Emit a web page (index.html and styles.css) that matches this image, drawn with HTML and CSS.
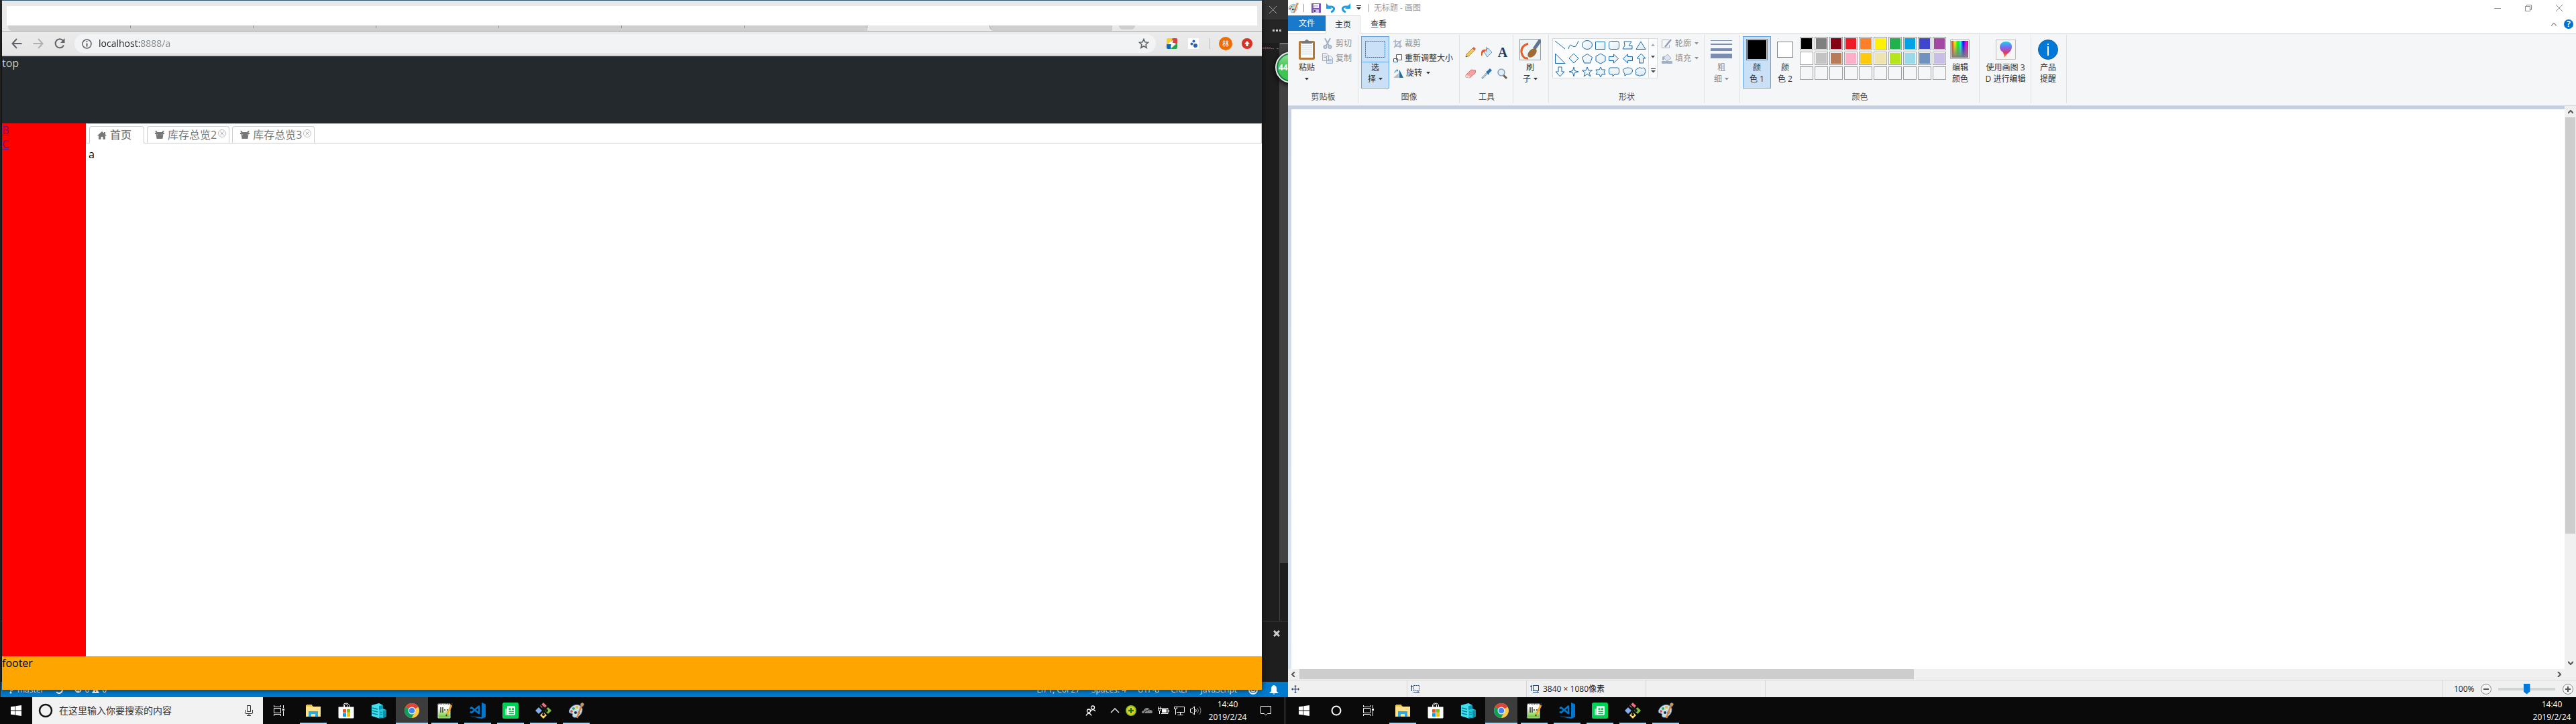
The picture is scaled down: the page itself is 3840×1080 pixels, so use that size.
FILE: index.html
```html
<!DOCTYPE html>
<html lang="zh-CN">
<head>
<meta charset="utf-8">
<title>无标题 - 画图</title>
<link rel="stylesheet" href="styles.css">
</head>
<body>
<svg class="defs" aria-hidden="true">
  <defs>
    <linearGradient id="shapeFill" x1="0" y1="0" x2="1" y2="1"><stop offset="0" stop-color="#fff"/><stop offset="1" stop-color="#dcecf7"/></linearGradient>
    <linearGradient id="rainbow"><stop offset="0" stop-color="#f00"/><stop offset=".2" stop-color="#ff0"/><stop offset=".38" stop-color="#0f0"/><stop offset=".55" stop-color="#0ff"/><stop offset=".7" stop-color="#00f"/><stop offset=".88" stop-color="#f0f"/><stop offset="1" stop-color="#f00"/></linearGradient>
    <linearGradient id="toGray" x1="0" y1="0" x2="0" y2="1"><stop offset="0" stop-color="#808080" stop-opacity="0"/><stop offset="1" stop-color="#808080"/></linearGradient>
    <linearGradient id="drop" x1="0" y1="0" x2="0" y2="1"><stop offset="0" stop-color="#19d3f5"/><stop offset=".35" stop-color="#7a6cf0"/><stop offset=".7" stop-color="#e0336e"/><stop offset="1" stop-color="#ffb300"/></linearGradient>
    <linearGradient id="notes" x1="0" y1="0" x2="0" y2="1"><stop offset=".3" stop-color="#fff"/><stop offset="1" stop-color="#62c41c"/></linearGradient>
    <radialGradient id="ball"><stop offset="0" stop-color="#fff36a"/><stop offset=".6" stop-color="#e5d51a"/><stop offset="1" stop-color="#6db52a"/></radialGradient>
  </defs>
  <symbol id="i-windows" viewBox="0 0 16 16"><path fill="#fff" d="M0 2.3 6.5 1.4v6.2H0zM7.3 1.3 16 0v7.6H7.3zM0 8.4h6.5v6.2L0 13.7zM7.3 8.4H16V16l-8.7-1.3z"/></symbol>
  <symbol id="i-taskview" viewBox="0 0 16 16"><path fill="none" stroke="#fff" d="M.5 0v2.5h10V0M.5 16v-2.5h10V16M.5 4.5h10v7H.5zM14.500 0v4M14.500 9v7"/><path fill="#fff" d="M13 5h3v3h-3z"/></symbol>
  <symbol id="i-folder" viewBox="0 0 22 18"><path fill="#f4c63d" d="M0 1h9l2 2h11v15H0z"/><path fill="#ffe28d" d="M0 3h22v15H0z"/><path fill="#ffb900" d="M1 0h8v1.500H1z"/><path fill="#2fa8e0" d="M4 10h14v8h-4v-4H8v4H4z"/></symbol>
  <symbol id="i-store" viewBox="0 0 24 24"><path fill="none" stroke="#fff" d="M7.500 7V3.500q3-5 6 0V7M9.500 7V3.500q3.500-5 7 0V7"/><path fill="#fff" d="M.5 6.500h23V22q0 1.500-1.500 1.500H2Q.5 23.500.5 22z"/><path fill="#f25022" d="M7 10h5v5H7z"/><path fill="#7fba00" d="M13 10h5v5h-5z"/><path fill="#00a4ef" d="M7 16h5v5H7z"/><path fill="#ffb900" d="M13 16h5v5h-5z"/></symbol>
  <symbol id="i-azure" viewBox="0 0 24 24"><path fill="#42dff0" d="M1 4 12 1l6 3v18l-6 1.500L1 20z"/><path fill="#0797ae" d="m12 5 6-1v18l-6 2z"/><path stroke="#087c91" stroke-width="1.500" d="m2 8 8 2M2 12l8 2M2 16l8 2"/><path fill="#23c6dc" d="m12 11 6-2 5 2v10l-5 2-6-2z"/><path fill="#0a8fa4" d="m18 12 5-1v10l-5 2z"/><path stroke="#087c91" d="m13 14 4 1m-4 2 4 1"/></symbol>
  <symbol id="i-chrome" viewBox="0 0 24 24"><circle cx="12" cy="12" r="11" fill="#fc4"/><path fill="#db4437" d="M12 12 2.500 6.500a11 11 0 0 1 19 0z"/><path fill="#0f9d58" d="M2.500 6.500A11 11 0 0 0 11.500 23l5-8.500L12 12z"/><circle cx="12" cy="12" r="5.500" fill="#f5f5f5"/><circle cx="12" cy="12" r="4.300" fill="#4285f4"/></symbol>
  <symbol id="i-notepad" viewBox="0 0 24 24"><path fill="url(#notes)" stroke="#ddd" d="M2 2h18v21H2z"/><path stroke="#555" stroke-dasharray="1 1.500" stroke-width="2" d="M2 2h18"/><path fill="none" stroke="#333" stroke-width="1.500" d="M6 7v8M9 7v8m2-4h2m2 0h2"/><path stroke="#f2a51d" stroke-width="3" d="M22 4 15 18"/><path stroke="#333" stroke-width="2" d="m23 1-1 2m-7 15-1 2"/></symbol>
  <symbol id="i-code" viewBox="0 0 24 24"><path fill="#0078d0" d="m18 0 6 2.500v19L18 24 0 20.500l18 1z"/><path fill="none" stroke="#0078d0" stroke-width="2.600" d="M14 5.500 3 15l-2-1.500M14 16 3 7.500 1 9"/><path stroke="#0078d0" stroke-width="2.500" d="M14 4.500V17"/></symbol>
  <symbol id="i-green" viewBox="0 0 24 24"><rect width="24" height="24" rx="2.500" fill="#00d154"/><path fill="#91edb8" d="M4 9h3v8h9v2H6q-2 0-2-2z"/><path fill="#fff" d="M7 5h12v12q0 2-2 2H9q-2 0-2-2z"/><path stroke="#00c550" stroke-width="1.500" d="M9.500 8.500h3m-3 2h3m1.500-2h3m-3 2h3m-7.500 3h7.500m-7.500 3h7.500"/></symbol>
  <symbol id="i-git" viewBox="0 0 24 24"><path fill="#f07078" d="m12 0 5 5-5 5-5-5z"/><path fill="#80aff0" d="m5 7 5 5-5 5-5-5z"/><path fill="#80c342" d="m19 7 5 5-5 5-5-5z"/><path fill="#ffd968" d="m12 14 5 5-5 5-5-5z"/><path fill="none" stroke="#15191b" stroke-width="2" d="M8 3l4 4v11m0-11 5 5"/><circle cx="12" cy="8" r="2" fill="#15191b"/><circle cx="17" cy="12" r="2" fill="#15191b"/><circle cx="12" cy="18" r="2" fill="#15191b"/></symbol>
  <symbol id="i-palette" viewBox="0 0 24 24"><path fill="#c7e1f0" stroke="#6a9cc0" d="M3 9C8 1 20 2 21 10c0 7-6 13-12 12-5-1 0-5-4-6-5 0-4-4-2-7z"/><circle cx="8" cy="9" r="2" fill="#30a94c"/><circle cx="5" cy="13" r="1.800" fill="#e43d30"/><circle cx="13" cy="7" r="2" fill="#f5b52c"/><circle cx="11" cy="15" r="2" fill="#1b2a35"/><circle cx="16" cy="15" r="2" fill="#2c79c8"/><path stroke="#e2812e" stroke-width="2.500" d="M20 4 13 23"/><path fill="#c79865" d="m18 2 3-2 3 2-2 4-3-1z"/></symbol>
  <symbol id="i-cart" viewBox="0 0 14 12"><path fill="none" stroke="#777" stroke-width="2" d="m1 0 2 3h8l2-3M0 4h14M2.500 5l1 6h7l1-6M7 5v6M5 5v6M9 5v6"/></symbol>
  <symbol id="i-close" viewBox="0 0 12 12"><circle cx="6" cy="6" r="5.500" fill="none" stroke="#bbb"/><path stroke="#aaa" d="m3.500 3.500 5 5m0-5-5 5"/></symbol>
  <symbol id="i-down" viewBox="0 0 6 4"><path fill="currentColor" d="M0 0h6L3 3.500z"/></symbol>
</svg>

<main class="monitors">
  <section class="monitor">
    <div class="desktop">
      <div class="vscode">
        <div class="vs-title"><svg width="11" height="11" viewBox="0 0 11 11"><path stroke="#aaa" d="m0 0 11 11M11 0 0 11"/></svg></div>
        <div class="vs-tabs"><svg width="13" height="3" viewBox="0 0 13 3"><path fill="#ccc" d="M0 0h3v3H0zM5 0h3v3H5zM10 0h3v3h-3z"/></svg></div>
        <div class="vs-editor">
          <svg class="minimap" width="26" height="12" viewBox="0 0 26 12"><path stroke="#8a5544" stroke-dasharray="2 1 3 1" d="M1 6.500h12"/><path stroke="#667" stroke-dasharray="3 1 1 1" d="M1 8.500h17m4 0h3"/></svg>
          <div class="vs-scroll"><div class="vs-thumb"></div></div>
        </div>
        <div class="vs-panel"><svg width="10" height="10" viewBox="0 0 10 10"><path stroke="#ccc" stroke-width="3" d="m1 1 8 8M9 1 1 9"/></svg></div>
        <div class="vs-status">
          <span class="branch"><svg width="8" height="12" viewBox="0 0 8 12"><path fill="none" stroke="#fff" d="M2 2v8m0-2q4 0 4-4"/><circle cx="2" cy="10" r="1.500" fill="#fff"/></svg>master</span>
          <svg width="12" height="12" viewBox="0 0 12 12"><path fill="none" stroke="#fff" stroke-width="2" d="M1 6a5 5 0 0 1 9-3M11 6a5 5 0 0 1-9 3"/></svg>
          <span class="problems"><svg width="11" height="11" viewBox="0 0 11 11"><circle cx="5.500" cy="5.500" r="5" fill="#fff"/><path stroke="#007acc" stroke-width="1.500" d="m3 3 5 5m0-5-5 5"/></svg>0 <svg width="11" height="11" viewBox="0 0 11 11"><path fill="#fff" d="m5.500 0 5.500 11H0z"/><path stroke="#007acc" d="M5.500 4v3m0 1v1"/></svg>0</span>
          <span class="grow"></span>
          <span>Ln 1, Col 27</span><span>Spaces: 4</span><span>UTF-8</span><span>CRLF</span><span>JavaScript</span>
          <svg width="14" height="14" viewBox="0 0 14 14"><circle cx="7" cy="7" r="6" fill="none" stroke="#fff" stroke-width="2"/><path fill="none" stroke="#fff" stroke-width="2" d="M4 8q3 4 6 0"/></svg>
          <svg width="14" height="14" viewBox="0 0 14 14"><path fill="#fff" d="M7 0q4 1 4 5v4l3 3H0l3-3V5q0-4 4-5zM5 12.500h4L7 14z"/></svg>
        </div>
      </div>

      <div class="browser">
        <div class="tabstrip">
          <div class="strip-blank"></div>
          <div class="tab-ends"><i></i><i></i><i></i><i></i><i></i><i></i><i></i><b></b><em></em><u></u></div>
        </div>
        <div class="toolbar">
          <button class="nav" aria-label="后退"><svg width="16" height="16" viewBox="0 0 16 16"><path fill="none" stroke="#5f6368" stroke-width="2" d="M15.500 8H2m6-7L1.500 8 8 15"/></svg></button>
          <button class="nav" aria-label="前进"><svg width="16" height="16" viewBox="0 0 16 16"><path fill="none" stroke="#aeb0b2" stroke-width="2" d="M.5 8H14M8 1l6.500 7L8 15"/></svg></button>
          <button class="nav" aria-label="重新加载"><svg width="16" height="16" viewBox="0 0 16 16"><path fill="none" stroke="#5f6368" stroke-width="2" d="M14 10.500A6.500 6.500 0 1 1 13 3.500"/><path fill="#5f6368" d="M15.500 0v7H9z"/></svg></button>
          <div class="address">
            <svg width="15" height="15" viewBox="0 0 15 15"><circle cx="7.500" cy="7.500" r="6.500" fill="none" stroke="#5f6368" stroke-width="1.500"/><path stroke="#5f6368" stroke-width="2" d="M7.500 3.200v1.800m0 1.500V11.500"/></svg>
            <input class="url" type="text" value="localhost:8888/a" aria-label="地址">
            <svg width="16" height="16" viewBox="0 0 16 16"><path fill="none" stroke="#5f6368" stroke-width="1.600" d="m8 1.500 1.900 4.300 4.600.5-3.400 3.200 1 4.800L8 11.800l-4.100 2.500 1-4.800L1.500 6.300l4.600-.5z"/></svg>
          </div>
          <button class="ext" aria-label="扩展"><svg width="16" height="16" viewBox="0 0 16 16"><path fill="#f9cf1c" d="M2 0h8L0 11V2q0-2 2-2z"/><path fill="#e23c39" d="M9 0h5q2 0 2 2v6H9L6 7z"/><path fill="#26a34b" d="M16 7v7q0 2-2 2H6z"/><path fill="#0b69ab" d="M0 9h8l-2 7H2q-2 0-2-2z"/><path fill="#fff" d="M10 2 3 9h4l-1 5 7-7H9z"/></svg></button>
          <button class="ext" aria-label="扩展"><svg width="16" height="16" viewBox="0 0 16 16"><path fill="#fff" d="M0 0h16v16H0z"/><g fill="#2a61b3"><circle cx="8.500" cy="4.500" r="2"/><circle cx="5.500" cy="8.500" r="2"/><circle cx="11" cy="11" r="3"/></g></svg></button>
          <span class="divider"></span>
          <button class="avatar">林</button>
          <button class="ext" aria-label="更新"><svg width="16" height="16" viewBox="0 0 16 16"><circle cx="8" cy="8" r="8" fill="#d93025"/><path fill="#fff" d="m8 4 4 4.500H9.500V12h-3V8.500H4z"/></svg></button>
        </div>
        <div class="page">
          <header class="page-top">top</header>
          <div class="page-body">
            <nav class="side"><a href="#b">B</a><a href="#c">C</a></nav>
            <div class="content">
              <div class="tabs">
                <button class="tab home"><svg width="14" height="12" viewBox="0 0 14 12"><path fill="#777" d="M7 0 0 6.500h2V12h3.500V8h3v4H12V6.500h2L12 4.500V1h-2v1.700z"/></svg>首页</button>
                <button class="tab"><svg width="14" height="12"><use href="#i-cart"/></svg>库存总览2<svg class="x" width="12" height="12"><use href="#i-close"/></svg></button>
                <button class="tab"><svg width="14" height="12"><use href="#i-cart"/></svg>库存总览3<svg class="x" width="12" height="12"><use href="#i-close"/></svg></button>
              </div>
              <div class="pane">a</div>
            </div>
          </div>
          <footer class="page-foot">footer</footer>
        </div>
      </div>
      <div class="speed">44</div>
    </div>

    <div class="taskbar">
      <button class="task" aria-label="开始"><svg width="16" height="16"><use href="#i-windows"/></svg></button>
      <label class="search">
        <svg width="22" height="22" viewBox="0 0 22 22"><circle cx="11" cy="11" r="9" fill="none" stroke="#111" stroke-width="2.500"/></svg>
        <input type="text" placeholder="在这里输入你要搜索的内容" aria-label="搜索">
        <svg width="12" height="18" viewBox="0 0 12 18"><path fill="none" stroke="#333" d="M3.500 1.500h5v9h-5zM.5 8v4.500q0 1 1 1h9q1 0 1-1V8M6 13.500v3m-3 0h6"/></svg>
      </label>
      <button class="task view" aria-label="任务视图"><svg width="16" height="16"><use href="#i-taskview"/></svg></button>
      <div class="apps">
        <button class="task open" aria-label="文件资源管理器"><svg width="22" height="18"><use href="#i-folder"/></svg></button>
        <button class="task" aria-label="应用商店"><svg width="24" height="24"><use href="#i-store"/></svg></button>
        <button class="task" aria-label="服务器"><svg width="24" height="24"><use href="#i-azure"/></svg></button>
        <button class="task open active" aria-label="Chrome"><svg width="24" height="24"><use href="#i-chrome"/></svg></button>
        <button class="task open" aria-label="Notepad++"><svg width="24" height="24"><use href="#i-notepad"/></svg></button>
        <button class="task open" aria-label="Visual Studio Code"><svg width="24" height="24"><use href="#i-code"/></svg></button>
        <button class="task open" aria-label="便签"><svg width="24" height="24"><use href="#i-green"/></svg></button>
        <button class="task open" aria-label="Git"><svg width="24" height="24"><use href="#i-git"/></svg></button>
        <button class="task open" aria-label="画图"><svg width="24" height="24"><use href="#i-palette"/></svg></button>
      </div>
      <span class="grow"></span>
      <svg class="people" width="16" height="16" viewBox="0 0 16 16"><g fill="none" stroke="#fff" stroke-width="1.300"><circle cx="11" cy="3.500" r="2.500"/><path d="M7.500 9q3.500-5 7.500 0"/><circle cx="5" cy="8.500" r="2.500"/><path d="M1 15.500q4-7 8 0"/></g></svg>
      <div class="tray">
        <svg width="24" height="16" viewBox="0 0 24 16"><path fill="none" stroke="#fff" stroke-width="1.300" d="m6 11 6-6 6 6"/></svg>
        <svg width="24" height="16" viewBox="0 0 24 16"><circle cx="12" cy="8" r="8" fill="url(#ball)"/><path stroke="#1c6a16" stroke-width="2.500" d="M12 4v8M8 8h8"/></svg>
        <svg width="24" height="16" viewBox="0 0 24 16"><path fill="#888" d="M4 11q0-3 3-3 1-4 5-4 3 0 4 3 4 0 4 3 0 2-2 2H6q-2 0-2-1z"/><path fill="none" stroke="#0a0a0a" d="M8 12q0-4 4-4 2-2 4-1"/></svg>
        <svg width="24" height="16" viewBox="0 0 24 16"><path fill="none" stroke="#fff" d="M8 4.500h11v8H9M20.500 7v3M5 2v2m3-2v2M4.500 4.500h4v3q-2 2-4 0zM6.500 8v5"/><path fill="#fff" d="M10 6h7v5h-7z"/></svg>
        <svg width="24" height="16" viewBox="0 0 24 16"><path fill="none" stroke="#fff" d="M8 2.500h11.500v8H8M13.500 11v3m-4 .5h8M4.500 2.500h4v3h-4zM6.500 6v8"/></svg>
        <svg width="24" height="16" viewBox="0 0 24 16"><path fill="none" stroke="#fff" d="M4.500 5.500h2l4-3.500v12l-4-3.500h-2z"/><path fill="none" stroke="#fff" d="M12.500 6q1.500 2 0 4"/><path fill="none" stroke="#888" d="M15 4q3 4 0 8m3-10q4 6 0 12"/></svg>
      </div>
      <time class="clock">14:40<br>2019/2/24</time>
      <button class="notify" aria-label="操作中心"><svg width="16" height="16" viewBox="0 0 16 16"><path fill="none" stroke="#fff" d="M.5 1.500h15v11h-5L8 15l-2.500-2.500h-5z"/></svg></button>
      <span class="peek"></span>
    </div>
  </section>

  <section class="monitor">
    <div class="paint">
      <div class="p-title">
        <svg width="16" height="16"><use href="#i-palette"/></svg>
        <span class="bar"></span>
        <button aria-label="保存"><svg width="14" height="14" viewBox="0 0 14 14"><path fill="#7d55b5" d="M0 0h14v14H0z"/><path fill="#fff" d="M3 1h8v6H3z"/><path fill="#d3c5e5" d="M3 9h8v5H3z"/><path stroke="#b99bd9" d="M4 3h6M4 5h6"/><path fill="#553388" d="M4 10h2v3H4z"/></svg></button>
        <button aria-label="撤消"><svg width="14" height="14" viewBox="0 0 14 14"><path fill="none" stroke="#209de0" stroke-width="3" d="M2 5h6q5 1 3 5-1 2-4 3"/><path fill="#209de0" d="M0 0v8h8z"/></svg></button>
        <button aria-label="重做"><svg width="14" height="14" viewBox="0 0 14 14"><path fill="none" stroke="#209de0" stroke-width="3" d="M12 5H6q-5 1-3 5 1 2 4 3"/><path fill="#209de0" d="M14 0v8H6z"/></svg></button>
        <button class="narrow" aria-label="自定义"><svg width="7" height="7" viewBox="0 0 7 7"><path fill="#222" d="M0 0h7v1H0zM0 3h7L3.500 6.500z"/></svg></button>
        <span class="bar"></span>
        <span class="p-name">无标题 - 画图</span>
        <span class="grow"></span>
        <div class="caption">
          <button aria-label="最小化"><svg width="10" height="10" viewBox="0 0 10 10"><path stroke="#888" d="M0 5.500h10"/></svg></button>
          <button aria-label="还原"><svg width="10" height="10" viewBox="0 0 10 10"><path fill="none" stroke="#888" d="M.5 2.500h7v7h-7zM2.500 2V.5h7v7H8"/></svg></button>
          <button aria-label="关闭"><svg width="10" height="10" viewBox="0 0 10 10"><path stroke="#888" d="m0 0 10 10M10 0 0 10"/></svg></button>
        </div>
      </div>
      <div class="p-tabs">
        <button class="file">文件</button><button class="on">主页</button><button class="look">查看</button>
        <span class="grow"></span>
        <svg width="8" height="5" viewBox="0 0 8 5"><path fill="none" stroke="#999" stroke-width="1.500" d="m0 4.500 4-4 4 4"/></svg>
        <button class="help" aria-label="帮助">?</button>
      </div>

      <div class="ribbon">
        <div class="group g-clip">
          <div class="tools">
            <button class="big paste"><span class="pic"><svg width="24" height="32" viewBox="0 0 24 32"><rect y="3" width="24" height="28" rx="2" fill="#b1783a"/><path fill="#fff" d="M3 6h18v22H3z"/><path stroke="#b9c9d8" d="M4 10.500h16m-16 3h16m-16 3h16m-16 3h16m-16 3h16"/><path fill="#777" d="M4 7q0-3 5-4 3-4 6 0 5 1 5 4z"/></svg></span><span>粘贴</span><svg class="arr" width="6" height="4"><use href="#i-down"/></svg></button>
            <div class="stack">
              <button class="off"><svg width="16" height="16" viewBox="0 0 16 16"><path stroke="#a3b0c6" stroke-width="2" d="m4 0 6 11M12 0 6 11"/><circle cx="4.500" cy="13" r="2" fill="none" stroke="#a3b0c6" stroke-width="2"/><circle cx="11.500" cy="13" r="2" fill="none" stroke="#a3b0c6" stroke-width="2"/></svg>剪切</button>
              <button class="off"><svg width="16" height="16" viewBox="0 0 16 16"><path fill="#edf1f7" stroke="#a3b0c6" d="M.5.5h6l3 3v8h-9zM6.500 4.500h6l3 3v8h-9z"/><path stroke="#a3b0c6" d="M8 9.500h6m-6 2h6m-6 2h6M2 4.500h4m-4 2h4"/></svg>复制</button>
            </div>
          </div>
          <h2>剪贴板</h2>
        </div>
        <div class="group g-image">
          <div class="tools">
            <button class="big picked split"><span class="pic"><svg width="30" height="25" viewBox="0 0 30 25"><path fill="none" stroke="#1f6fb5" stroke-dasharray="2 1" d="M.5.5h29v24H.5z"/></svg></span><span>选</span><span>择<svg width="6" height="4"><use href="#i-down"/></svg></span></button>
            <div class="stack">
              <button class="off"><svg width="13" height="13" viewBox="0 0 13 13"><path fill="none" stroke="#a3b0c6" stroke-width="1.500" d="M3 0v10h10M0 3h10v10M1 12 12 1"/></svg>裁剪</button>
              <button><svg width="13" height="13" viewBox="0 0 13 13"><path fill="#fff" stroke="#1c66a5" d="M4.500.5h8v8h-8zM.5 6.500h6v5h-6z"/></svg>重新调整大小</button>
              <button><svg width="15" height="13" viewBox="0 0 15 13"><path fill="#1f6fa5" d="M9 1v12h6z"/><path fill="#b8bcc2" d="M8 6v7H0z"/><path fill="none" stroke="#2a82d0" d="M2 6q0-4 4-4M5 0l2 2-2 2"/></svg>旋转<svg class="tail" width="6" height="4"><use href="#i-down"/></svg></button>
            </div>
          </div>
          <h2>图像</h2>
        </div>
        <div class="group g-tools">
          <div class="tools toolgrid">
            <button aria-label="铅笔"><svg width="16" height="16" viewBox="0 0 16 16"><path fill="#f4c855" stroke="#8a6a2c" stroke-width=".7" d="m1 15 1-4L11 2l3 3-9 9z"/><path fill="#d95757" d="m11 2 2-2 3 3-2 2z"/><path fill="#333" d="m1 15 .6-2 1.400 1.400z"/></svg></button>
            <button aria-label="填充"><svg width="16" height="16" viewBox="0 0 16 16"><path fill="#d3e9f8" stroke="#5c8dbb" d="m4 7 6-5 6 6-7 7z"/><path fill="#e75627" d="M8 4Q1 3 0 8v5q2 1 2-4l3-2z"/><path stroke="#667" d="M8 0v7"/></svg></button>
            <button class="letter" aria-label="文本">A</button>
            <button aria-label="橡皮擦"><svg width="16" height="16" viewBox="0 0 16 16"><path fill="#f2a1a0" stroke="#bf6463" stroke-width=".8" d="m1 10 8-8 7 1-1 4-8 7-6-1z"/><path fill="#fbd3d2" d="m1 10 6 1v3l-6-1z"/></svg></button>
            <button aria-label="颜色选取器"><svg width="16" height="16" viewBox="0 0 16 16"><path stroke="#89a" stroke-width="2.500" d="m1 15 8-8"/><path stroke="#e8f1f8" d="m2 14 7-7"/><path fill="#2a6fb2" d="m7 5 2-1 4-4 3 3-4 4-1 3z"/></svg></button>
            <button aria-label="放大镜"><svg width="16" height="16" viewBox="0 0 16 16"><path stroke="#795a45" stroke-width="3" d="m9 10 5 5"/><circle cx="6" cy="6" r="5" fill="#dceefa" stroke="#8a9fb8" stroke-width="1.500"/></svg></button>
          </div>
          <h2>工具</h2>
        </div>
        <div class="group g-brush">
          <div class="tools">
            <button class="big"><span class="pic"><svg width="32" height="32" viewBox="0 0 32 32"><path fill="#edf4f7" stroke="#999" d="M.5.500h31v31H.5z"/><path fill="none" stroke="#ed5a24" stroke-width="3" d="M13 7Q2 11 3 20q2 10 10 9"/><path stroke="#5d7494" stroke-width="5" d="M31 2 22 15"/><ellipse cx="19" cy="21" rx="5" ry="8" fill="#a06a36" transform="rotate(45 19 21)"/></svg></span><span>刷</span><span>子<svg width="6" height="4"><use href="#i-down"/></svg></span></button>
          </div>
        </div>
        <div class="group g-shapes">
          <div class="tools">
            <div class="gallery">
              <svg class="shapes" width="142" height="58" viewBox="0 0 142 58" fill="url(#shapeFill)" stroke="#1a66a8">
                <path fill="none" d="m3 3 15 12M23 15q2-8 5-5t6 1q2-3 4-8"/><ellipse cx="51" cy="9" rx="7.500" ry="6.500"/><path d="M63.500 4.500h14v11h-14z"/><rect x="83.500" y="3.500" width="15" height="12" rx="3"/><path d="m106 4 11 0-4 6h5v5h-14l3-5zM131 4l7 11.500h-14z"/>
                <path d="M3.500 22v14.500H18zM31 22l7 7-7 7-7-7zM51 22.500l7.500 5-3 8.500h-9l-3-8.500zM71 22l7 4v7l-7 4-7-4v-7zM83.500 26.500h7V23l7 6.500-7 6.500v-3.500h-7zM118.500 26.500h-7V23l-7 6.500 7 6.500v-3.500h7zM128.500 36v-7H125l6.500-7 6.500 7h-3.500v7z"/>
                <path d="M8 42v7H4l6.500 7 6.500-7h-4v-7zM31 42l1.500 5.500L38 49l-5.500 1.500L31 56l-1.500-5.500L24 49l5.500-1.500zM51 42l2 5h5.500l-4.500 3.500 2 5.500-5-3.500-5 3.500 2-5.500-4.500-3.500H49zM71 42l2 4h5l-2 3.500 2 3.500h-5l-2 4-2-4h-5l2-3.500-2-3.500h5zM86 43h10q2.500 0 2.500 3v4q0 3-2.500 3h-4l-3 3v-3h-3q-2.500 0-2.500-3v-4q0-3 2.500-3zM107 55v-3q-7-7 4-9 8 0 7.500 5-1 5-8 5zM127 44q2-3 5 0 4-2 5 1 3 4 0 6 0 4-5 3-3 3-5 0-5 1-3-4-3-4 3-6z"/>
              </svg>
              <div class="gscroll"><svg width="6" height="4" viewBox="0 0 6 4"><path fill="#a8afb9" d="M0 4h6L3 0z"/></svg><svg width="6" height="4"><use href="#i-down"/></svg><svg width="7" height="7" viewBox="0 0 7 7"><path fill="#444b57" d="M0 0h7v1H0zM0 3h7L3.500 6.500z"/></svg></div>
            </div>
            <div class="stack">
              <button class="off"><svg width="16" height="14" viewBox="0 0 16 14"><path fill="none" stroke="#a3b0c6" d="M11 1.500H.5v12h11V9"/><path stroke="#8fa0bb" stroke-width="2.500" d="m5 12 9-11"/></svg>轮廓<svg class="tail" width="6" height="4"><use href="#i-down"/></svg></button>
              <button class="off"><svg width="16" height="16" viewBox="0 0 16 16"><path fill="#dfe5ee" stroke="#a3b0c6" d="m3 7 6-5 5 6-6 4z"/><path fill="#a3b0c6" d="M0 12h16v4H0zM1 6l3-2v7H1z"/></svg>填充<svg class="tail" width="6" height="4"><use href="#i-down"/></svg></button>
            </div>
          </div>
          <h2>形状</h2>
        </div>
        <div class="group g-size">
          <div class="tools">
            <button class="big off"><span class="pic"><svg width="32" height="28" viewBox="0 0 32 28"><path fill="#7a8db0" d="M0 0h32v1H0zM0 5h32v2H0zM0 12h32v4H0zM0 20h32v7H0z"/></svg></span><span>粗</span><span>细<svg width="6" height="4"><use href="#i-down"/></svg></span></button>
          </div>
        </div>
        <div class="group g-colors">
          <div class="tools">
            <button class="big picked"><span class="pic"><i class="sw black"></i></span><span>颜</span><span>色 1</span></button>
            <button class="big second"><span class="pic"><i class="sw white"></i></span><span>颜</span><span>色 2</span></button>
            <div class="palette">
              <button style="--c:#000000" aria-label="黑色"></button><button style="--c:#7f7f7f" aria-label="灰色"></button><button style="--c:#880015" aria-label="深红"></button><button style="--c:#ed1c24" aria-label="红色"></button><button style="--c:#ff7f27" aria-label="橙色"></button><button style="--c:#fff200" aria-label="黄色"></button><button style="--c:#22b14c" aria-label="绿色"></button><button style="--c:#00a2e8" aria-label="青绿"></button><button style="--c:#3f48cc" aria-label="靛青"></button><button style="--c:#a349a4" aria-label="紫色"></button>
              <button style="--c:#ffffff" aria-label="白色"></button><button style="--c:#c3c3c3" aria-label="浅灰"></button><button style="--c:#b97a57" aria-label="褐色"></button><button style="--c:#ffaec9" aria-label="玫瑰色"></button><button style="--c:#ffc90e" aria-label="金色"></button><button style="--c:#efe4b0" aria-label="浅黄"></button><button style="--c:#b5e61d" aria-label="酸橙色"></button><button style="--c:#99d9ea" aria-label="淡青绿"></button><button style="--c:#7092be" aria-label="蓝灰"></button><button style="--c:#c8bfe7" aria-label="淡紫"></button>
              <button class="empty" aria-label="自定义1"></button><button class="empty" aria-label="自定义2"></button><button class="empty" aria-label="自定义3"></button><button class="empty" aria-label="自定义4"></button><button class="empty" aria-label="自定义5"></button><button class="empty" aria-label="自定义6"></button><button class="empty" aria-label="自定义7"></button><button class="empty" aria-label="自定义8"></button><button class="empty" aria-label="自定义9"></button><button class="empty" aria-label="自定义10"></button>
            </div>
            <button class="big edit"><span class="pic"><svg width="30" height="30" viewBox="0 0 30 30"><path fill="#f6f6f6" stroke="#aaa" d="M.5.5h28v28H.5z"/><path fill="url(#rainbow)" d="M2 2h25v25H2z"/><path fill="url(#toGray)" d="M2 2h25v25H2z"/></svg></span><span>编辑</span><span>颜色</span></button>
          </div>
          <h2>颜色</h2>
        </div>
        <div class="group g-3d">
          <div class="tools">
            <button class="big"><span class="pic"><svg width="30" height="30" viewBox="0 0 30 30"><path fill="#f5f5f5" stroke="#bbb" d="M.5.5h29v29H.5z"/><path fill="url(#drop)" d="M15 3q9 0 9 8 0 5-5 9-3 2-6 7-1-5-2-8-5-3-5-8 1-8 9-8z"/></svg></span><span>使用画图 3</span><span>D 进行编辑</span></button>
          </div>
        </div>
        <div class="group g-tip">
          <div class="tools">
            <button class="big"><span class="pic"><svg width="30" height="30" viewBox="0 0 30 30"><circle cx="15" cy="15" r="14.500" fill="#0078d7" stroke="#0a5ea3"/><path fill="#fff" d="M14 6h2v2h-2zM14 10h2v14h-2z"/></svg></span><span>产品</span><span>提醒</span></button>
          </div>
        </div>
      </div>

      <div class="work">
        <div class="canvas"></div>
        <div class="vbar">
          <svg width="8" height="6" viewBox="0 0 8 6"><path fill="none" stroke="#555" stroke-width="2" d="m0 5 4-4 4 4"/></svg>
          <div class="vtrack"><div class="vthumb"></div></div>
          <svg width="8" height="6" viewBox="0 0 8 6"><path fill="none" stroke="#555" stroke-width="2" d="m0 1 4 4 4-4"/></svg>
        </div>
        <div class="hbar">
          <svg width="6" height="8" viewBox="0 0 6 8"><path fill="none" stroke="#555" stroke-width="2" d="M5 0 1 4l4 4"/></svg>
          <div class="htrack"><div class="hthumb"></div></div>
          <svg width="6" height="8" viewBox="0 0 6 8"><path fill="none" stroke="#555" stroke-width="2" d="m1 0 4 4-4 4"/></svg>
        </div>
      </div>

      <div class="p-status">
        <div class="cell"><svg width="12" height="12" viewBox="0 0 12 12"><path stroke="#1d3c66" d="M6 0v12M0 6h12M4.500 1.500h3m-3 9h3M1.500 4.500v3m9-3v3"/></svg></div>
        <div class="cell"><svg width="13" height="12" viewBox="0 0 13 12"><path fill="none" stroke="#1d3c66" stroke-dasharray="2 1" d="M4.500.5h8v8h-8z"/><path fill="none" stroke="#1d3c66" d="M1.500 0v9M0 2.500h3m1 8h9m-2-2v3"/></svg></div>
        <div class="cell"><svg width="13" height="12" viewBox="0 0 13 12"><path fill="none" stroke="#1d3c66" d="M4.500.5h8v8h-8zM1.500 0v9M0 2.500h3m1 8h9m-2-2v3"/></svg>3840 × 1080像素</div>
        <div class="cell"></div>
        <div class="grow"></div>
        <div class="zoomer">
          <label for="zoom">100%</label>
          <button aria-label="缩小"><svg width="16" height="16" viewBox="0 0 16 16"><circle cx="8" cy="8" r="7.500" fill="#f6f6f6" stroke="#888"/><path stroke="#555" stroke-width="2" d="M4 8h8"/></svg></button>
          <input id="zoom" type="range" min="0" max="100" value="50">
          <button aria-label="放大"><svg width="16" height="16" viewBox="0 0 16 16"><circle cx="8" cy="8" r="7.500" fill="#f6f6f6" stroke="#888"/><path stroke="#555" stroke-width="2" d="M4 8h8M8 4v8"/></svg></button>
        </div>
      </div>
    </div>

    <div class="taskbar">
      <button class="task" aria-label="开始"><svg width="16" height="16"><use href="#i-windows"/></svg></button>
      <button class="task" aria-label="Cortana"><svg width="16" height="16" viewBox="0 0 16 16"><circle cx="8" cy="8" r="6.500" fill="none" stroke="#fff" stroke-width="2"/></svg></button>
      <button class="task view" aria-label="任务视图"><svg width="16" height="16"><use href="#i-taskview"/></svg></button>
      <div class="apps">
        <button class="task open" aria-label="文件资源管理器"><svg width="22" height="18"><use href="#i-folder"/></svg></button>
        <button class="task" aria-label="应用商店"><svg width="24" height="24"><use href="#i-store"/></svg></button>
        <button class="task" aria-label="服务器"><svg width="24" height="24"><use href="#i-azure"/></svg></button>
        <button class="task open active" aria-label="Chrome"><svg width="24" height="24"><use href="#i-chrome"/></svg></button>
        <button class="task open" aria-label="Notepad++"><svg width="24" height="24"><use href="#i-notepad"/></svg></button>
        <button class="task open" aria-label="Visual Studio Code"><svg width="24" height="24"><use href="#i-code"/></svg></button>
        <button class="task open" aria-label="便签"><svg width="24" height="24"><use href="#i-green"/></svg></button>
        <button class="task open" aria-label="Git"><svg width="24" height="24"><use href="#i-git"/></svg></button>
        <button class="task open" aria-label="画图"><svg width="24" height="24"><use href="#i-palette"/></svg></button>
      </div>
      <span class="grow"></span>
      <time class="clock">14:40<br>2019/2/24</time>
    </div>
  </section>
</main>
</body>
</html>
```
FILE: styles.css
```css
* { box-sizing: border-box; }
body { margin: 0; font: 12px/16px "Open Sans", "Noto Sans CJK SC", sans-serif; color: #333; }
svg { display: block; flex: none; }
button { display: flex; align-items: center; justify-content: center; margin: 0; padding: 0; border: 0; background: none; font: inherit; color: inherit; white-space: nowrap; flex: none; }
input { font: inherit; border: 0; outline: 0; padding: 0; margin: 0; background: none; min-width: 0; }
.defs { position: absolute; width: 0; height: 0; }
.grow { flex: 1; }

.monitors { display: grid; grid-template-columns: 1fr 1fr; height: 100vh; }
.monitor { display: flex; flex-direction: column; min-width: 0; overflow: hidden; }
.desktop { position: relative; flex: 1; overflow: hidden; display: flex; }

/* editor window, behind */
.vscode { flex: 1; display: flex; flex-direction: column; background: #1e1e1e; border-left: 1px solid #2b2b2b; }
.vs-title { height: 29px; background: #333; display: flex; align-items: center; justify-content: flex-end; padding-right: 17px; }
.vs-tabs { height: 35px; background: #252526; display: flex; align-items: center; justify-content: flex-end; padding: 0 10px 2px 0; }
.vs-editor { flex: 1; display: flex; justify-content: flex-end; border-bottom: 1px solid #414141; }
.vs-scroll { width: 13px; border-left: 1px solid #414141; }
.vs-thumb { height: 90%; background: #424242; border-top: 2px solid #777; }
.vs-panel { height: 90px; display: flex; justify-content: flex-end; padding: 13px 12px 0 0; }
.vs-status { height: 23px; background: #007acc; color: #fff; display: flex; align-items: center; gap: 17px; padding: 0 14px 0 13px; }
.branch, .problems { display: flex; align-items: center; gap: 4px; }

/* browser window */
.browser { position: absolute; inset: 0 39px 11px 3px; display: flex; flex-direction: column; background: #fff; border-top: 1px solid #2c5470; box-shadow: 0 0 8px rgba(0,0,0,.7); }
.tabstrip { height: 46px; background: #e8e8e8; border-bottom: 1px solid #a3a3a3; padding-top: 8px; }
.strip-blank { height: 29px; margin: 0 7px; background: #fff; }
.tab-ends { display: flex; height: 8px; padding-left: 9px; }
.tab-ends i { width: 183px; background: linear-gradient(#999, #999) right top / 1px 4px no-repeat #cecece; }
.tab-ends i:first-child { border-bottom-left-radius: 6px; }
.tab-ends b { width: 183px; margin-left: 182px; background: #cecece; border: 1px solid #a3a3a3; border-width: 0 0 0 1px; border-bottom-left-radius: 7px; }
.tab-ends em { width: 10px; }
.tab-ends u { width: 24px; height: 6px; background: #cecece; border-radius: 0 0 12px 12px; }
.toolbar { height: 37px; display: flex; align-items: center; background: linear-gradient(#ebebeb, #e5e5e5); border-bottom: 1px solid #9a9a9a; padding: 0 14px 0 6px; }
.nav { width: 32px; height: 28px; }
.address { flex: 1; display: flex; align-items: center; gap: 10px; height: 28px; margin: 0 16px 0 6px; padding: 0 10px 0 11px; border-radius: 14px; background: #f1f3f4; }
.url { flex: 1; font-size: 14px; line-height: 20px; color: #80868b; background: linear-gradient(90deg, #202124 61px, #80868b 61px); -webkit-background-clip: text; background-clip: text; -webkit-text-fill-color: transparent; }
.ext { width: 16px; height: 16px; }
.ext + .ext { margin-left: 16px; }
.divider { width: 1px; height: 16px; background: #bbb; margin: 0 13px 0 16px; }
.avatar { width: 20px; height: 20px; border-radius: 50%; background: #ef6c00; color: #fff; font-size: 10px; margin-right: 14px; }
.page { flex: 1; display: flex; flex-direction: column; font-size: 16px; line-height: 21px; color: #000; }
.page-top { height: 100px; background: #23292c; color: #ccc; }
.page-body { flex: 1; display: flex; }
.side { width: 125px; background: #f00; display: flex; flex-direction: column; align-items: flex-start; }
.side a { color: #551a8b; }
.content { flex: 1; display: flex; flex-direction: column; }
.tabs { height: 30px; display: flex; align-items: flex-end; gap: 4px; padding-left: 4px; border: 1px solid #ccc; border-left: 1px solid #ddd; }
.tab { height: 25px; gap: 5px; padding: 0 4px 0 11px; color: #777; border: 1px solid #ccc; border-bottom: 0; border-radius: 4px 4px 0 0; background: #fff; }
.tab .x { margin: -4px 0 0 -3px; }
.home { height: 26px; margin-bottom: -1px; padding-right: 18px; font-weight: 500; }
.pane { padding: 6px 4px; }
.page-foot { height: 50px; background: orange; }
.speed { position: absolute; left: calc(100% - 19px); top: 77px; width: 47px; height: 47px; border-radius: 50%; border: 2px solid #e8e8e8; background: linear-gradient(#9be39b, #3ec653 50%); box-shadow: inset 0 0 0 2px #1d7d4a, 0 2px 8px #000; color: #fff; font-weight: 700; line-height: 43px; padding-left: 3px; }

/* taskbar */
.taskbar { height: 40px; display: flex; align-items: stretch; background: #0a0a0a; color: #fff; }
.task { width: 48px; position: relative; }
.view { margin-right: 3px; }
.apps { display: flex; gap: 1px; }
.open::after { content: ""; position: absolute; left: 4px; right: 4px; bottom: 0; height: 2px; background: #a6d8f5; }
.active { background: #3c3c3c; }
.active::after { left: 0; right: 0; }
.search { width: 344px; display: flex; align-items: center; gap: 9px; padding: 0 15px 0 9px; background: #f2f2f2; }
.search input { flex: 1; font-size: 14px; line-height: 20px; }
.search input::placeholder { color: #333; opacity: 1; }
.people { align-self: center; margin-right: 16px; }
.tray { display: flex; align-items: center; }
.clock { width: 72px; align-self: center; text-align: center; line-height: 19px; }
.notify { width: 42px; }
.peek { width: 1px; background: #666; margin: 0 4px 0 7px; }

/* paint window */
.paint { flex: 1; display: flex; flex-direction: column; background: #fff; min-height: 0; }
.p-title { height: 23px; display: flex; align-items: center; color: #999; }
.p-title .bar { width: 1px; height: 12px; background: #999; margin: 0 7px; }
.p-title button { width: 22px; height: 22px; }
.p-title .narrow { width: 16px; }
.caption { display: flex; padding-right: 2px; }
.p-title .caption button { width: 46px; }
.p-tabs { height: 27px; display: flex; align-items: center; border-bottom: 1px solid #dadbdc; padding-right: 4px; }
.p-tabs .file { width: 56px; height: 23px; background: #1979ca; color: #fff; align-self: flex-start; }
.p-tabs .on { width: 52px; height: 27px; background: #f5f6f7; border: 1px solid #dadbdc; border-bottom: 0; margin-bottom: -1px; }
.p-tabs .look { width: 54px; }
.p-tabs .help { width: 14px; height: 14px; border-radius: 50%; background: #0072cf; color: #fff; margin-left: 11px; font-weight: 700; }
.ribbon { height: 108px; display: flex; background: #f5f6f7; border-bottom: 1px solid #dadbdc; }
.group { display: flex; flex-direction: column; justify-content: space-between; background: linear-gradient(#e0e1e3, #e0e1e3) right 2px / 1px 102px no-repeat; }
.group h2 { margin: 0 0 4px; font-size: 12px; font-weight: 400; line-height: 16px; text-align: center; color: #555; }
.tools { display: flex; align-items: flex-start; padding: 4px 4px 0; }
.g-clip { width: 105px; }
.g-image { width: 151px; }
.g-tools { width: 80px; }
.g-brush, .g-size, .g-tip { width: 53px; }
.g-shapes { width: 232px; }
.g-colors { width: 357px; }
.g-3d { width: 77px; }
.g-3d .tools { padding: 4px 0 0; justify-content: center; }
.big { width: 42px; height: 78px; flex-direction: column; justify-content: flex-start; border: 1px solid transparent; line-height: 17px; }
.big > span { display: flex; align-items: center; gap: 4px; }
.big .pic { height: 37px; }
.picked { background: #c9e0f7; border-color: #62a2e4; }
.split { background: linear-gradient(#62a2e4, #62a2e4) 0 37px / 100% 1px no-repeat #c9e0f7; }
.arr { margin-top: 7px; }
.off { color: #8f8f8f; }
.stack { display: flex; flex-direction: column; }
.stack button { height: 22px; gap: 4px; justify-content: flex-start; }
.stack .tail { margin-left: 2px; }
.paste { margin-left: 3px; }
.g-clip .stack { padding-left: 2px; }
.g-image .stack { padding-left: 6px; }
.toolgrid { display: grid; grid-template-columns: 24px 24px 24px; grid-auto-rows: 32px; padding-top: 12px; }
.toolgrid button { height: 32px; }
.letter { font: 700 20px/24px "Liberation Serif", serif; color: #203a63; }
.gallery { display: flex; width: 157px; height: 60px; margin: 3px 6px 0 1px; border: 1px solid #dadbdc; background: #fbfcfd; }
.gscroll { flex: 1; display: flex; flex-direction: column; align-items: center; justify-content: space-around; border-left: 1px solid #dadbdc; color: #444b57; }
.g-shapes .stack .tail { margin-left: 1px; }
.sw { display: block; border: 1px solid #808080; background-clip: content-box; }
.black { width: 32px; height: 32px; background-color: #000; padding: 1px; }
.white { width: 24px; height: 24px; background-color: #fff; }
.palette { display: grid; grid-template-columns: repeat(10, 20px); grid-auto-rows: 20px; gap: 2px; margin: 1px 0 0 1px; }
.palette button { border: 1px solid #a0a0a0; padding: 1px; background: linear-gradient(var(--c), var(--c)) content-box, #fff; }
.palette .empty { background: #f5f6f7; }
.work { flex: 1; display: grid; grid-template-columns: 1fr 17px; grid-template-rows: 1fr 16px; min-height: 0; background: #f0f0f0; }
.canvas { border: solid #c6cfe0; border-width: 5px 0 0 5px; border-image: linear-gradient(#c6cfe0, #dce6f2) 5; background: #fff; }
.vbar { display: flex; flex-direction: column; align-items: center; padding: 6px 1px; gap: 5px; }
.vtrack { flex: 1; align-self: stretch; }
.vthumb { height: 77%; background: #cdcdcd; }
.hbar { display: flex; align-items: center; padding: 0 5px; gap: 6px; }
.htrack { flex: 1; align-self: stretch; }
.hthumb { width: 49%; height: 15px; background: #cdcdcd; }
.p-status { height: 26px; display: flex; background: #f0f0f0; border-top: 1px solid #d7d7d7; color: #222; }
.cell { width: 178px; display: flex; align-items: center; gap: 6px; padding-left: 5px; border-right: 1px solid #d7d7d7; }
.zoomer { display: flex; align-items: center; border-left: 1px solid #d7d7d7; padding: 0 4px 0 17px; }
.zoomer label { width: 40px; }
.zoomer input { width: 85px; height: 16px; margin: 0 11px 0 10px; appearance: none; background: linear-gradient(#d0d4d4, #d0d4d4) center / 100% 4px no-repeat; }
.zoomer input::-webkit-slider-thumb { appearance: none; width: 10px; height: 16px; background: #0078d7; clip-path: polygon(0 0, 100% 0, 100% 75%, 50% 100%, 0 75%); }
```
